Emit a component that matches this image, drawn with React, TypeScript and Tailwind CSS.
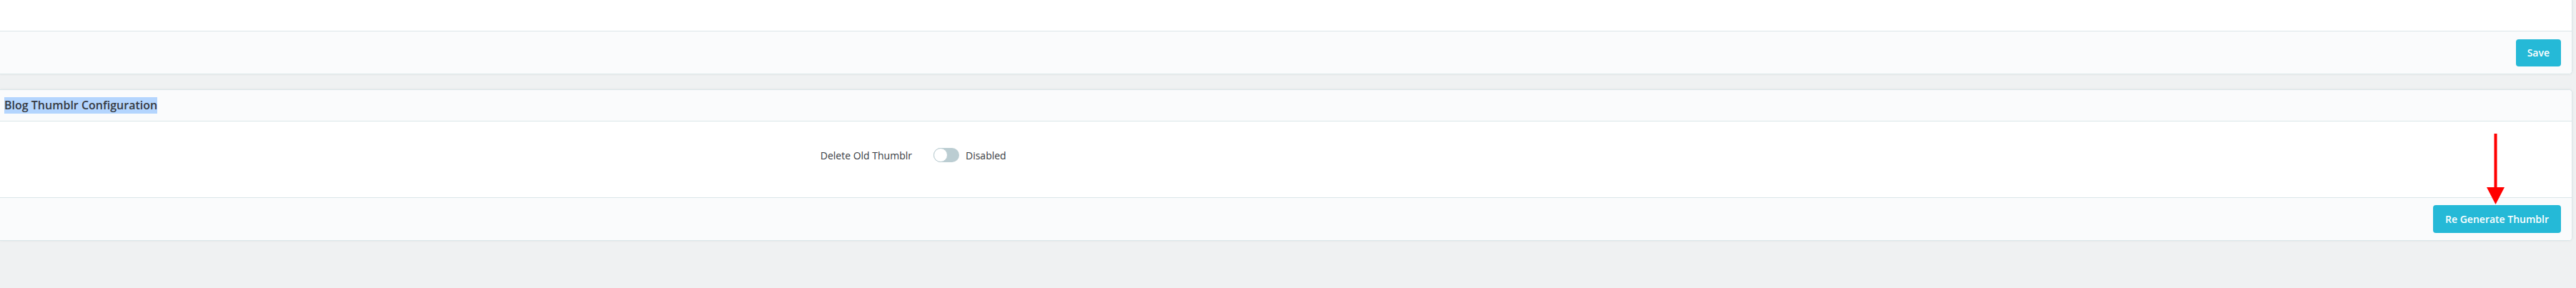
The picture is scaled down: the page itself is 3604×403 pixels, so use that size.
import React, { useState } from 'react';

const font = { fontFamily: '"Open Sans", "Noto Sans", Arial, sans-serif' };

const Toggle: React.FC<{ on: boolean; onChange: (v: boolean) => void }> = ({ on, onChange }) => (
  <button
    type="button"
    onClick={() => onChange(!on)}
    className={`relative w-[36px] h-[20px] rounded-full ${on ? 'bg-[#70b580]' : 'bg-[#bbcdd2]'}`}
  >
    <span
      className={`absolute top-0 w-[20px] h-[20px] rounded-full bg-white border border-[#bbcdd2] ${on ? 'left-[16px]' : 'left-0'}`}
    />
  </button>
);

export default function App() {
  const [deleteOld, setDeleteOld] = useState(false);

  return (
    <div className="relative w-full h-[403px] bg-[#eff1f2] pr-[5px] overflow-hidden" style={font}>
      {/* previous card, top is scrolled out of view */}
      <div className="bg-white border-r border-b border-[#dbe6e9] rounded-br-[5px] shadow-[0_0_4px_0_rgba(0,0,0,0.06)]">
        <div className="h-[43px]" />
        <div className="h-[60px] bg-[#fafbfc] border-t border-[#dbe6e9] rounded-br-[5px] flex items-center justify-end pr-[15px]">
          <button className="h-[38px] px-[16px] rounded-[4px] bg-[#25b9d7] text-white text-[14px] font-semibold">
            Save
          </button>
        </div>
      </div>

      {/* Blog Thumblr Configuration */}
      <div className="mt-[21px] bg-white border-t border-r border-b border-[#dbe6e9] rounded-r-[5px] shadow-[0_0_4px_0_rgba(0,0,0,0.06)]">
        <div className="h-[44px] bg-[#fafbfc] border-b border-[#dbe6e9] rounded-tr-[5px] flex items-center pl-[6px]">
          <span className="bg-[#b4d5fe] text-[#363a41] text-[16px] font-semibold leading-[23px]">
            Blog Thumblr Configuration
          </span>
        </div>
        <div className="h-[106px] pt-[29px]">
          <div className="h-[36px] flex items-center text-[14px] text-[#363a41]">
            <label className="w-[1291px] pr-[15px] text-right">Delete Old Thumblr</label>
            <div className="pl-[15px] flex items-center">
              <Toggle on={deleteOld} onChange={setDeleteOld} />
              <span className="ml-[9px]">{deleteOld ? 'Enabled' : 'Disabled'}</span>
            </div>
          </div>
        </div>
        <div className="h-[60px] bg-[#fafbfc] border-t border-[#dbe6e9] rounded-br-[5px] flex items-center justify-end pr-[15px]">
          <button className="h-[39px] px-[17px] rounded-[4px] bg-[#25b9d7] text-white text-[14px] font-semibold">
            Re Generate Thumblr
          </button>
        </div>
      </div>

      {/* annotation arrow */}
      <svg className="absolute left-[3479px] top-[187px]" width="26" height="100" viewBox="0 0 26 100">
        <rect x="10.5" y="0" width="4" height="78" fill="#ff0000" />
        <polygon points="0,75 25,75 12.5,99" fill="#ff0000" />
      </svg>
    </div>
  );
}
